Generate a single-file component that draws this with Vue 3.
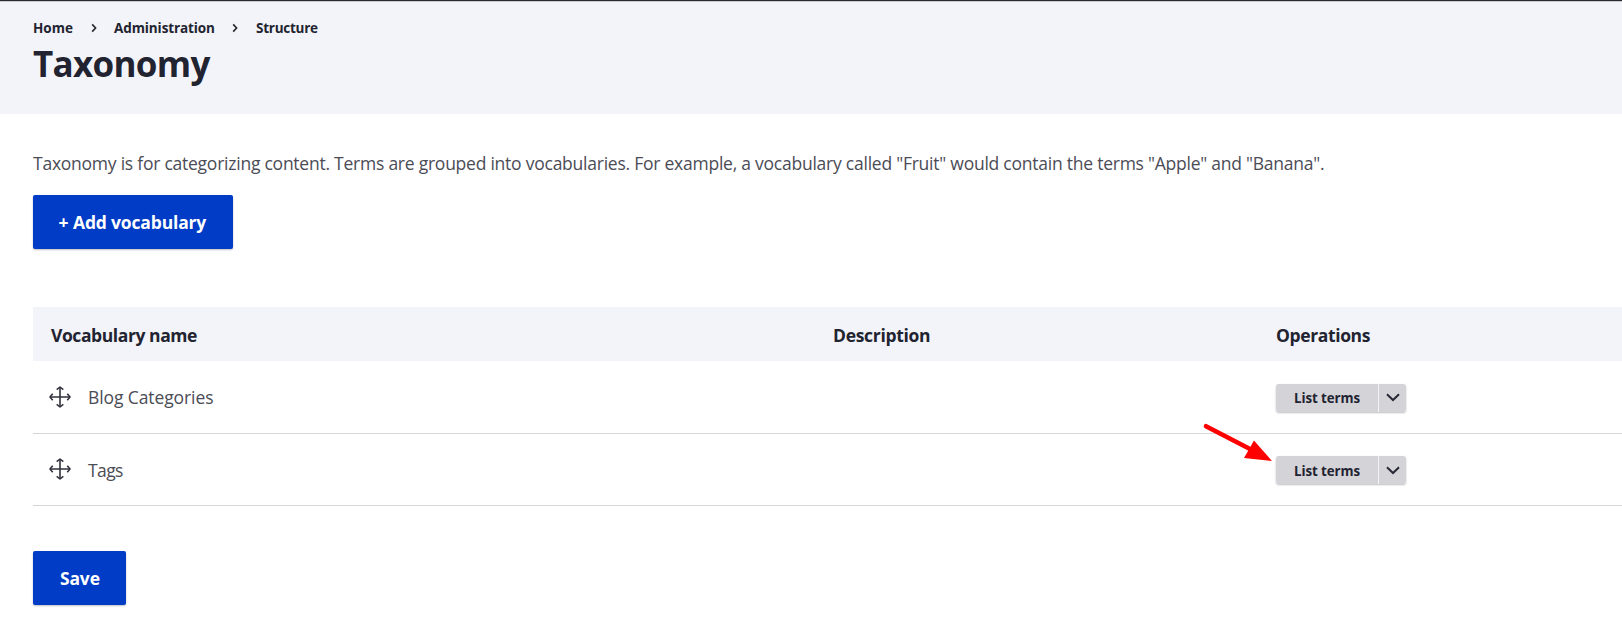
<script setup>
const crumbs = [
  { label: 'Home', cls: 'home' },
  { label: 'Administration', cls: 'admin' },
  { label: 'Structure', cls: 'structure' },
]
const rows = [
  { name: 'Blog Categories', cls: 'blog' },
  { name: 'Tags', cls: 'tags', pointed: true },
]
</script>

<template>
  <div class="page">
    <header class="header">
      <nav class="crumbs">
        <template v-for="(c, i) in crumbs" :key="c.label">
          <svg v-if="i" class="sep" width="6" height="10" viewBox="0 0 6 10">
            <path d="M1.2 1.4 4.6 5 1.2 8.6" fill="none" stroke="#232429" stroke-width="1.6" />
          </svg>
          <a :class="['crumb', c.cls]">{{ c.label }}</a>
        </template>
      </nav>
      <h1 class="title">Taxonomy</h1>
    </header>

    <main class="content">
      <p class="intro">Taxonomy is for categorizing content. Terms are grouped into vocabularies. For example, a vocabulary called "Fruit" would contain the terms "Apple" and "Banana".</p>
      <button class="primary add"><span class="plus">+</span><span>Add vocabulary</span></button>

      <section class="table">
        <div class="row head">
          <span class="h-name">Vocabulary name</span>
          <span class="h-desc">Description</span>
          <span class="h-ops">Operations</span>
        </div>
        <div v-for="r in rows" :key="r.name" class="row item">
          <div class="name">
            <svg class="move" width="22" height="22" viewBox="0 0 22 22" fill="none" stroke="#32333d" stroke-width="1.6">
              <path d="M11 1.3V20.7M1.3 11H20.7" />
              <path d="M7.7 3.7 11 1 14.3 3.7M7.7 18.3 11 21 14.3 18.3M3.7 7.7 1 11 3.7 14.3M18.3 7.7 21 11 18.3 14.3" stroke-linejoin="round" />
            </svg>
            <span :class="r.cls">{{ r.name }}</span>
          </div>
          <span></span>
          <div class="ops">
            <div class="drop">
              <button class="list"><span>List terms</span></button>
              <button class="toggle" aria-label="More operations">
                <svg width="14" height="9" viewBox="0 0 14 9">
                  <path d="M1 1.3 7 7 13 1.3" fill="none" stroke="#282936" stroke-width="2" />
                </svg>
              </button>
            </div>
            <svg v-if="r.pointed" class="arrow" width="72" height="42" viewBox="0 0 72 42">
              <path d="M4 4.2 48 27" stroke="#f00" stroke-width="4.6" stroke-linecap="round" />
              <path d="M52 18.4 70 39 42 36Z" fill="#f00" />
            </svg>
          </div>
        </div>
      </section>

      <button class="primary save"><span>Save</span></button>
    </main>
  </div>
</template>

<style>
body {
  margin: 0;
  background: #fff;
}
</style>

<style scoped>
.page {
  width: 1622px;
  height: 628px;
  overflow: hidden;
  box-sizing: border-box;
  font-family: "Open Sans", "Noto Sans", sans-serif;
  font-size: 17.5px;
  color: #4b4c56;
  white-space: nowrap;
}
.header {
  box-sizing: border-box;
  height: 114px;
  padding: 17px 33px 0;
  border-top: 1px solid #2b2b2f;
  box-shadow: inset 0 1px #c9cad0;
  background: #f3f4f9;
  color: #222330;
}
.crumbs {
  display: flex;
  align-items: center;
  height: 20px;
  font-size: 13.5px;
  font-weight: 700;
}
.crumb { display: block; }
.home { width: 58px; }
.admin {
  width: 118px;
  letter-spacing: -0.1px;
}
.structure {
  margin-left: 1px;
  letter-spacing: -0.25px;
}
.sep { margin-right: 17px; }
.title {
  margin: 2px 0 0;
  font-size: 35px;
  line-height: 48px;
  font-weight: 700;
  letter-spacing: -0.7px;
}
.content { padding: 37px 0 0 33px; }
.intro {
  margin: 0;
  line-height: 24px;
  letter-spacing: -0.24px;
}
.primary {
  display: flex;
  align-items: center;
  box-sizing: border-box;
  height: 54px;
  padding: 0 0 0 27px;
  border: 0;
  border-radius: 2px;
  background: #003cc5;
  box-shadow: 0 1px 2px rgba(0, 0, 0, 0.25);
  color: #fff;
  font: inherit;
  font-weight: 700;
  letter-spacing: -0.17px;
}
.add {
  width: 200px;
  margin-top: 20px;
  padding-left: 23px;
}
.plus {
  width: 19px;
  margin-left: -2px;
}
.table { margin-top: 58px; }
.row {
  display: grid;
  grid-template-columns: 783px 443px 1fr;
  align-items: center;
  box-sizing: border-box;
}
.head {
  height: 54px;
  padding: 1px 0 0 18px;
  background: #f3f4f9;
  color: #222330;
  font-weight: 700;
}
.h-name { letter-spacing: -0.42px; }
.h-desc { margin-left: -1px; letter-spacing: -0.3px; }
.h-ops { margin-left: -1px; letter-spacing: -0.38px; }
.item {
  height: 72px;
  padding: 0 0 0 16px;
  grid-template-columns: 784px 443px 1fr;
  border-bottom: 1px solid #d5d5da;
}
.item:nth-child(2) { height: 73px; }
.name {
  display: flex;
  align-items: center;
  gap: 17px;
}
.move {
  position: relative;
  top: -0.5px;
}
.blog { letter-spacing: -0.1px; }
.tags { letter-spacing: -0.6px; }
.ops {
  position: relative;
  height: 28px;
  top: 0.5px;
}
.drop {
  display: flex;
  width: 130px;
  height: 28px;
  border-radius: 3px;
  overflow: hidden;
  box-shadow: 0 1px 2px rgba(0, 0, 0, 0.25);
  background: #f3f3f5;
  gap: 1px;
}
.list, .toggle {
  display: flex;
  align-items: center;
  padding: 0;
  border: 0;
  background: #d4d4d8;
  color: #222330;
}
.list {
  width: 102px;
  padding: 1px 0 0 18px;
  font: inherit;
  font-size: 13.3px;
  font-weight: 700;
  letter-spacing: -0.08px;
}
.toggle {
  flex: 1;
  justify-content: center;
}
.arrow {
  position: absolute;
  left: -74px;
  top: -34px;
}
.save {
  width: 93px;
  margin-top: 45px;
}
</style>
